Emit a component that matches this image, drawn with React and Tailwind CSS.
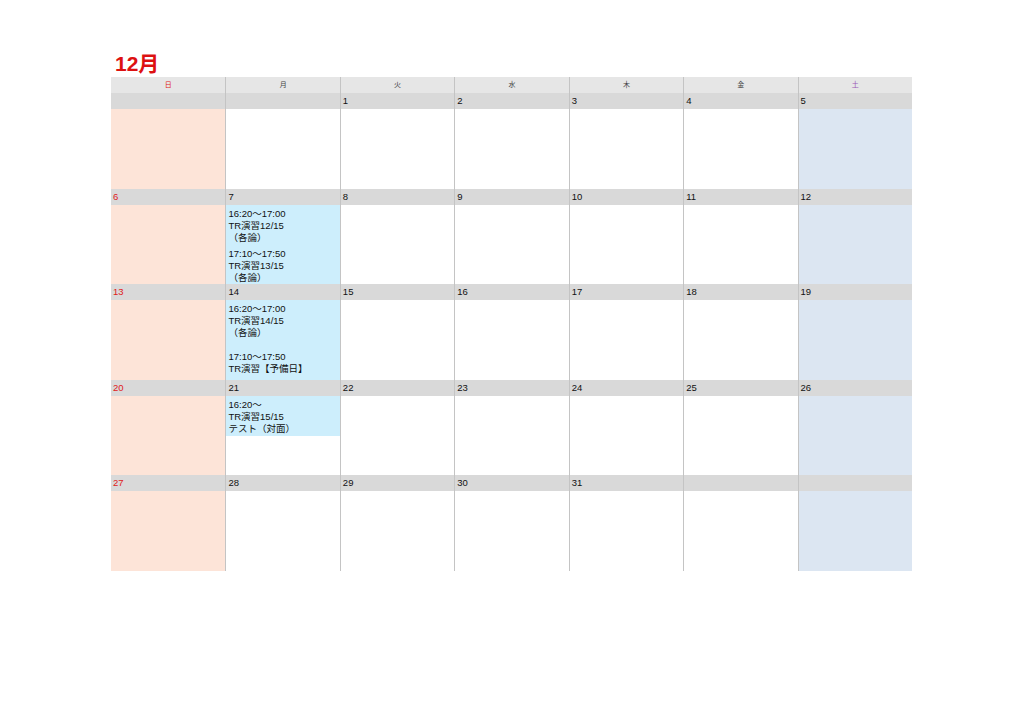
import React from 'react';

const font = { fontFamily: '"Liberation Sans", "Noto Sans CJK JP", sans-serif' };

const headers = ['日', '月', '火', '水', '木', '金', '土'];

// 各週の日付（空欄は ''）
const weeks = [
  ['', '', '1', '2', '3', '4', '5'],
  ['6', '7', '8', '9', '10', '11', '12'],
  ['13', '14', '15', '16', '17', '18', '19'],
  ['20', '21', '22', '23', '24', '25', '26'],
  ['27', '28', '29', '30', '31', '', ''],
];

const events = {
  '7': { full: true, blocks: [['16:20〜17:00', 'TR演習12/15', '（各論）'], ['17:10〜17:50', 'TR演習13/15', '（各論）']] },
  '14': { full: true, blocks: [['16:20〜17:00', 'TR演習14/15', '（各論）', '\u00a0', '17:10〜17:50', 'TR演習【予備日】']] },
  '21': { full: false, blocks: [['16:20〜', 'TR演習15/15', 'テスト（対面）']] },
};

function headerColor(i) {
  if (i === 0) return 'text-[#e02020]';
  if (i === 6) return 'text-[#9b59b6]';
  return 'text-[#444]';
}

function bodyBg(i) {
  if (i === 0) return 'bg-[#fde4d8]';
  if (i === 6) return 'bg-[#dce6f2]';
  return 'bg-white';
}

function DayCell({ date, col }) {
  const ev = events[date];
  return (
    <div className={`flex flex-col ${col > 0 ? 'border-l border-[#c4c4c4]' : ''}`}>
      <div className={`h-[16px] bg-[#d9d9d9] pl-[2px] text-[9.5px] leading-[16px] ${col === 0 ? 'text-[#e02020]' : 'text-[#111]'}`}>
        {date}
      </div>
      <div className={`h-[79.6px] ${bodyBg(col)}`}>
        {ev && (
          <div className={`bg-[#cdeefc] pl-[2px] pt-[3px] text-[9.5px] leading-[12px] text-[#111] ${ev.full ? 'h-full' : 'h-[40px]'}`}>
            {ev.blocks.map((b, bi) => (
              <div key={bi} className={bi > 0 ? 'mt-[4px]' : ''}>
                {b.map((line, li) => (
                  <div key={li}>{line}</div>
                ))}
              </div>
            ))}
          </div>
        )}
      </div>
    </div>
  );
}

export default function App() {
  return (
    <div className="w-[1024px] h-[724px] bg-white" style={font}>
      <div className="pl-[111px] pt-[51px]">
        <div className="pl-[4px] text-[21px] font-bold leading-[26px] text-[#dd1111]">12月</div>
        <div className="w-[801px]">
          <div className="grid grid-cols-7 bg-[#e6e6e6]">
            {headers.map((h, i) => (
              <div
                key={h}
                className={`h-[16px] text-center text-[7px] leading-[16px] ${headerColor(i)} ${i > 0 ? 'border-l border-[#c4c4c4]' : ''}`}
              >
                {h}
              </div>
            ))}
          </div>
          {weeks.map((w, wi) => (
            <div key={wi} className="grid grid-cols-7">
              {w.map((d, ci) => (
                <DayCell key={ci} date={d} col={ci} />
              ))}
            </div>
          ))}
        </div>
      </div>
    </div>
  );
}
